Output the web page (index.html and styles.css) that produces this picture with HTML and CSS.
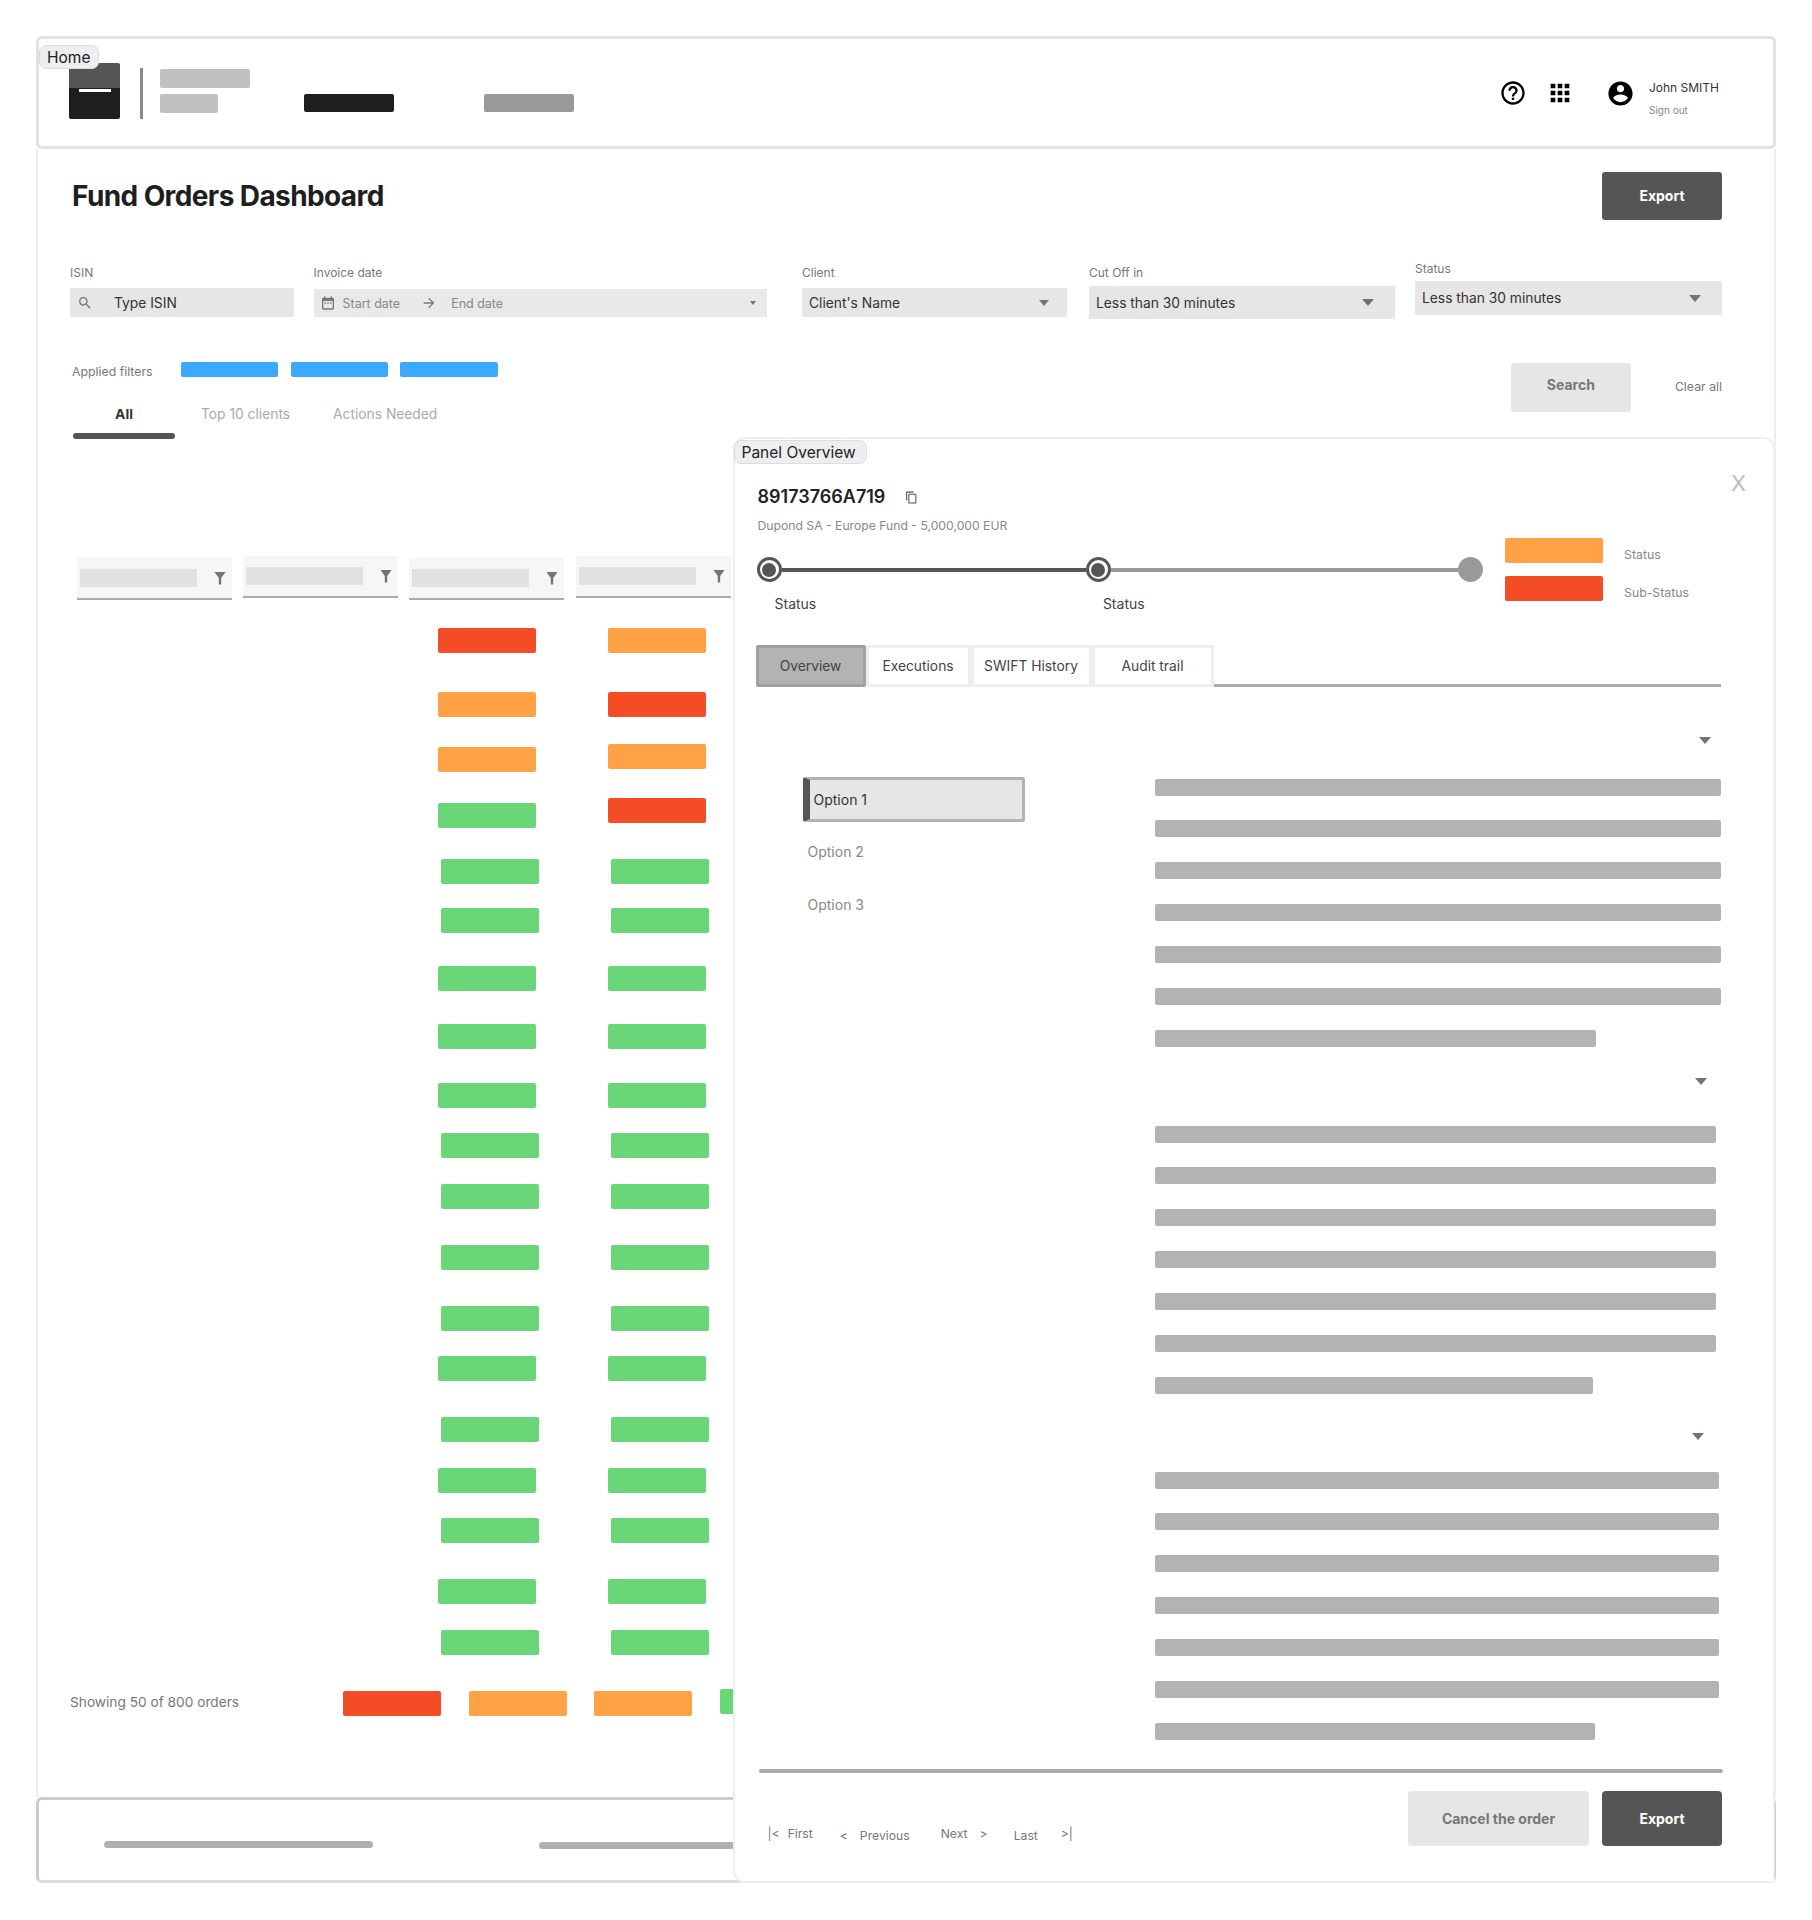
FILE: index.html
```html
<!DOCTYPE html>
<html>
<head>
  <link rel="stylesheet" href="styles.css">
</head>
<body>
  <div class="shell">
    <div class="frame-label home-label">Home</div>

    <header class="topbar">
      <div class="logo"><div class="logo-mark"></div></div>
      <div class="logo-divider"></div>
      <div class="brand">
        <div class="brand-line"></div>
        <div class="brand-line short"></div>
      </div>
      <div class="nav-item active"></div>
      <div class="nav-item"></div>
      <div class="user-tools">
        <svg class="tool-icon" viewBox="0 0 24 24"><path d="M11 18h2v-2h-2v2zm1-16C6.48 2 2 6.48 2 12s4.48 10 10 10 10-4.48 10-10S17.52 2 12 2zm0 18c-4.41 0-8-3.59-8-8s3.59-8 8-8 8 3.59 8 8-3.59 8-8 8zm0-14c-2.21 0-4 1.79-4 4h2c0-1.1.9-2 2-2s2 .9 2 2c0 2-3 1.75-3 5h2c0-2.25 3-2.5 3-5 0-2.21-1.79-4-4-4z"/></svg>
        <svg class="tool-icon apps" viewBox="0 0 24 24"><path d="M4 8h4V4H4v4zm6 12h4v-4h-4v4zm-6 0h4v-4H4v4zm0-6h4v-4H4v4zm6 0h4v-4h-4v4zm6-10v4h4V4h-4zm-6 4h4V4h-4v4zm6 6h4v-4h-4v4zm0 6h4v-4h-4v4z"/></svg>
        <svg class="tool-icon account" viewBox="0 0 24 24"><path d="M12 2C6.48 2 2 6.48 2 12s4.48 10 10 10 10-4.48 10-10S17.52 2 12 2zm0 3c1.66 0 3 1.34 3 3s-1.34 3-3 3-3-1.34-3-3 1.34-3 3-3zm0 14.2c-2.5 0-4.71-1.28-6-3.22.03-1.99 4-3.08 6-3.08 1.99 0 5.97 1.09 6 3.08-1.29 1.94-3.5 3.22-6 3.22z"/></svg>
        <div class="user-text">
          <div class="user-name">John SMITH</div>
          <div class="sign-out">Sign out</div>
        </div>
      </div>
    </header>

    <main class="main">
      <div class="title-row">
        <h1 class="title">Fund Orders Dashboard</h1>
        <button class="btn btn-dark">Export</button>
      </div>

      <div class="filter-row">
        <div class="field field-isin">
          <label class="field-label">ISIN</label>
          <div class="field-box">
            <svg class="field-icon" viewBox="0 0 24 24"><path d="M15.5 14h-.79l-.28-.27A6.47 6.47 0 0 0 16 9.5 6.5 6.5 0 1 0 9.5 16c1.61 0 3.09-.59 4.23-1.57l.27.28v.79l5 4.99L20.49 19l-4.99-5zm-6 0C7.01 14 5 11.99 5 9.5S7.01 5 9.5 5 14 7.01 14 9.5 11.99 14 9.5 14z"/></svg>
            <span class="field-value">Type ISIN</span>
          </div>
        </div>
        <div class="field field-date">
          <label class="field-label">Invoice date</label>
          <div class="field-box">
            <svg class="field-icon" viewBox="0 0 24 24"><path d="M19 4h-1V2h-2v2H8V2H6v2H5c-1.1 0-2 .9-2 2v14c0 1.1.9 2 2 2h14c1.1 0 2-.9 2-2V6c0-1.1-.9-2-2-2zm0 16H5V9h14v11zM7 11h2v2H7zm4 0h2v2h-2zm4 0h2v2h-2z"/></svg>
            <span class="date-start">Start date</span>
            <svg class="field-icon date-arrow" viewBox="0 0 24 24"><path d="M12 4l-1.41 1.41L16.17 11H4v2h12.17l-5.58 5.59L12 20l8-8z"/></svg>
            <span class="date-end">End date</span>
            <span class="caret caret-tiny"></span>
          </div>
        </div>
        <div class="field field-client">
          <label class="field-label">Client</label>
          <div class="field-box">
            <span class="field-value">Client's Name</span>
            <span class="caret caret-small"></span>
          </div>
        </div>
        <div class="field field-cutoff">
          <label class="field-label">Cut Off in</label>
          <div class="field-box">
            <span class="field-value">Less than 30 minutes</span>
            <span class="caret"></span>
          </div>
        </div>
        <div class="field field-status">
          <label class="field-label">Status</label>
          <div class="field-box">
            <span class="field-value">Less than 30 minutes</span>
            <span class="caret"></span>
          </div>
        </div>
      </div>

      <div class="search-row">
        <div>
          <div class="applied">
            <span class="applied-label">Applied filters</span>
            <span class="chip"></span>
            <span class="chip"></span>
            <span class="chip"></span>
          </div>
          <div class="list-tabs">
            <div class="list-tab active">All</div>
            <div class="list-tab">Top 10 clients</div>
            <div class="list-tab">Actions Needed</div>
          </div>
        </div>
        <div class="search-actions">
          <button class="btn btn-light btn-search">Search</button>
          <span class="clear-all">Clear all</span>
        </div>
      </div>

      <div class="table-head">
        <div class="th"><div class="th-name"></div><svg class="funnel" viewBox="0 0 16 16"><path d="M2.5 2h11L9.2 8v6.5H6.8V8z"/></svg></div>
        <div class="th up"><div class="th-name"></div><svg class="funnel" viewBox="0 0 16 16"><path d="M2.5 2h11L9.2 8v6.5H6.8V8z"/></svg></div>
        <div class="th"><div class="th-name"></div><svg class="funnel" viewBox="0 0 16 16"><path d="M2.5 2h11L9.2 8v6.5H6.8V8z"/></svg></div>
        <div class="th up"><div class="th-name"></div><svg class="funnel" viewBox="0 0 16 16"><path d="M2.5 2h11L9.2 8v6.5H6.8V8z"/></svg></div>
      </div>

      <div class="table-rows">
        <div class="badge red col3"></div><div class="badge orange col4"></div>
        <div class="badge orange col3"></div><div class="badge red col4"></div>
        <div class="badge orange col3"></div><div class="badge orange col4 up-3"></div>
        <div class="badge green col3"></div><div class="badge red col4 up-5"></div>
        <div class="badge green col3 shift"></div><div class="badge green col4 shift"></div>
        <div class="badge green col3 shift"></div><div class="badge green col4 shift"></div>
        <div class="badge green col3"></div><div class="badge green col4"></div>
        <div class="badge green col3"></div><div class="badge green col4"></div>
        <div class="badge green col3"></div><div class="badge green col4"></div>
        <div class="badge green col3 shift"></div><div class="badge green col4 shift"></div>
        <div class="badge green col3 shift"></div><div class="badge green col4 shift"></div>
        <div class="badge green col3 shift"></div><div class="badge green col4 shift"></div>
        <div class="badge green col3 shift"></div><div class="badge green col4 shift"></div>
        <div class="badge green col3"></div><div class="badge green col4"></div>
        <div class="badge green col3 shift"></div><div class="badge green col4 shift"></div>
        <div class="badge green col3"></div><div class="badge green col4"></div>
        <div class="badge green col3 shift"></div><div class="badge green col4 shift"></div>
        <div class="badge green col3"></div><div class="badge green col4"></div>
        <div class="badge green col3 shift"></div><div class="badge green col4 shift"></div>
      </div>

      <div class="table-foot">
        <span class="showing">Showing 50 of 800 orders</span>
        <div class="badge red"></div>
        <div class="badge orange"></div>
        <div class="badge orange"></div>
        <div class="badge green up-2"></div>
      </div>
    </main>

    <footer class="bottom-bar">
      <div class="bottom-line"></div>
      <div class="bottom-line low"></div>
    </footer>

    <aside class="panel">
      <div class="frame-label panel-label">Panel Overview</div>
      <div class="close">X</div>

      <div class="order-id">
        <span>89173766A719</span>
        <svg class="copy-icon" viewBox="0 0 24 24"><path d="M16 1H4c-1.1 0-2 .9-2 2v14h2V3h12V1zm3 4H8c-1.1 0-2 .9-2 2v14c0 1.1.9 2 2 2h11c1.1 0 2-.9 2-2V7c0-1.1-.9-2-2-2zm0 16H8V7h11v14z"/></svg>
      </div>
      <div class="order-sub">Dupond SA - Europe Fund - 5,000,000 EUR</div>

      <div class="status-row">
        <div>
          <div class="stepper">
            <span class="step done"></span>
            <span class="step-line done first"></span>
            <span class="step done"></span>
            <span class="step-line second"></span>
            <span class="step"></span>
          </div>
          <div class="step-labels">
            <span class="step-label">Status</span>
            <span class="step-label">Status</span>
          </div>
        </div>
        <div class="legend">
          <div class="legend-row"><div class="badge orange"></div><span class="legend-text">Status</span></div>
          <div class="legend-row"><div class="badge red"></div><span class="legend-text">Sub-Status</span></div>
        </div>
      </div>

      <div class="panel-tabs">
        <div class="panel-tab active tab-overview">Overview</div>
        <div class="panel-tab tab-exec">Executions</div>
        <div class="panel-tab tab-swift">SWIFT History</div>
        <div class="panel-tab tab-audit">Audit trail</div>
        <div class="tabs-line"></div>
      </div>

      <div class="panel-body">
        <div class="options">
          <div class="option active">Option 1</div>
          <div class="option">Option 2</div>
          <div class="option">Option 3</div>
        </div>
        <div class="details">
          <section class="detail one">
            <span class="caret detail-caret"></span>
            <div class="detail-bars">
              <div class="line"></div><div class="line"></div><div class="line"></div><div class="line"></div><div class="line"></div><div class="line"></div><div class="line short"></div>
            </div>
          </section>
          <section class="detail two">
            <span class="caret detail-caret"></span>
            <div class="detail-bars">
              <div class="line"></div><div class="line"></div><div class="line"></div><div class="line"></div><div class="line"></div><div class="line"></div><div class="line short"></div>
            </div>
          </section>
          <section class="detail three">
            <span class="caret detail-caret"></span>
            <div class="detail-bars">
              <div class="line"></div><div class="line"></div><div class="line"></div><div class="line"></div><div class="line"></div><div class="line"></div><div class="line short"></div>
            </div>
          </section>
        </div>
      </div>

      <div class="panel-divider"></div>

      <div class="panel-foot">
        <div class="pager">
          <span class="page-link first"><span>|&lt;</span><span>First</span></span>
          <span class="page-link prev low"><span>&lt;</span><span>Previous</span></span>
          <span class="page-link next"><span>Next</span><span>&gt;</span></span>
          <span class="page-link last"><span class="low">Last</span><span>&gt;|</span></span>
        </div>
        <div class="panel-actions">
          <button class="btn btn-light btn-cancel">Cancel the order</button>
          <button class="btn btn-dark btn-panel">Export</button>
        </div>
      </div>
    </aside>
  </div>
</body>
</html>
```

FILE: styles.css
```css
* {
  box-sizing: border-box;
  margin: 0;
  padding: 0;
}

body {
  background-color: #fff;
  font-family: Inter, "Liberation Sans", sans-serif;
  color: #333;
  padding: 36px;
}

button {
  font-family: inherit;
  border: none;
}

.shell {
  position: relative;
  width: 1740px;
  height: 1847px;
}

.frame-label {
  position: absolute;
  background-color: #eee;
  border: 1px solid #ddd;
  border-radius: 7px;
  font-size: 15.5px;
  line-height: 24px;
  color: #222;
  z-index: 2;
}

.home-label {
  top: 9px;
  left: 3px;
  width: 60px;
  height: 24px;
  padding-left: 7px;
}

/* top bar */
.topbar {
  display: flex;
  height: 113px;
  padding: 24px 0 0 30px;
  border: 3px solid #e2e2e2;
  border-radius: 6px;
}

.logo {
  width: 51px;
  height: 56px;
  border-radius: 2px;
  padding-top: 26px;
  background: linear-gradient(#555 45%, #1e1e1e 45%);
}

.logo-mark {
  width: 32px;
  height: 3px;
  margin: 0 auto;
  background-color: #fff;
}

.logo-divider {
  width: 3px;
  height: 51px;
  margin: 5px 0 0 20px;
  background-color: #888;
}

.brand {
  display: flex;
  flex-direction: column;
  gap: 6px;
  margin: 6px 0 0 17px;
}

.brand-line {
  width: 90px;
  height: 19px;
  border-radius: 2px;
  background-color: #c1c1c1;
}

.brand-line.short {
  width: 58px;
}

.nav-item {
  width: 90px;
  height: 18px;
  margin: 31px 0 0 90.5px;
  border-radius: 2px;
  background-color: #999;
}

.nav-item.active {
  margin-left: 53.5px;
  background-color: #1e1e1e;
}

.user-tools {
  display: flex;
  align-items: center;
  margin: 15px 0 0 auto;
  height: 30px;
  padding-right: 54px;
}

.tool-icon {
  width: 28px;
  height: 28px;
  fill: #000;
}

.tool-icon.apps {
  margin-left: 19px;
}

.tool-icon.account {
  width: 29px;
  height: 29px;
  margin-left: 32px;
}

.user-text {
  margin-left: 14px;
  padding-top: 11px;
}

.user-name {
  font-size: 12px;
  line-height: 14px;
  color: #333;
}

.sign-out {
  font-size: 10px;
  line-height: 12px;
  margin-top: 9px;
  color: #888;
}

/* main */
.main {
  height: 1648px;
  padding: 22.5px 52px 0 32px;
  border-left: 2px solid #eee;
  border-right: 2px solid #eee;
}

.title-row {
  display: flex;
  justify-content: space-between;
  align-items: center;
}

.title {
  font-size: 28px;
  font-weight: 700;
  letter-spacing: -0.6px;
  color: #1e1e1e;
  margin-left: 2px;
}

.btn {
  border-radius: 3px;
  font-size: 14px;
  font-weight: 700;
}

.btn-dark {
  width: 120px;
  height: 48px;
  background-color: #555;
  color: #fff;
}

.btn-light {
  background-color: #e6e6e6;
  color: #777;
}

.filter-row {
  display: flex;
  align-items: flex-start;
  margin-top: 46.5px;
}

.field-label {
  display: block;
  font-size: 12px;
  line-height: 14px;
  color: #777;
  margin-bottom: 8px;
}

.field-box {
  display: flex;
  align-items: center;
  height: 29px;
  padding-left: 7px;
  background-color: #e6e6e6;
  font-size: 13.8px;
}

.field-value {
  color: #333;
}

.field-icon {
  width: 16px;
  height: 16px;
  flex-shrink: 0;
  fill: #777;
}

.caret {
  display: inline-block;
  width: 0;
  height: 0;
  margin-left: auto;
  border-left: 6px solid transparent;
  border-right: 6px solid transparent;
  border-top: 7px solid #6f7575;
}

.caret-small {
  border-left-width: 5px;
  border-right-width: 5px;
  border-top-width: 6px;
  margin-right: 18px;
}

.caret-tiny {
  border-left-width: 3px;
  border-right-width: 3px;
  border-top-width: 4px;
  margin-right: 11px;
}

.field-isin {
  width: 224px;
}

.field-isin .field-icon {
  margin-right: 21px;
}

.field-date {
  width: 453px;
  margin-left: 19.5px;
}

.field-date .field-box {
  height: 28px;
  margin-top: 9px;
  padding-left: 6px;
  background-color: #e8eaea;
  font-size: 12.5px;
  color: #888;
}

.date-start {
  margin-left: 7px;
}

.date-arrow {
  margin-left: 21px;
}

.date-end {
  margin-left: 14px;
}

.field-client {
  width: 265px;
  margin-left: 35.5px;
}

.field-cutoff {
  width: 306px;
  margin-left: 22px;
}

.field-cutoff .field-label {
  margin-bottom: 6px;
}

.field-cutoff .field-box {
  height: 33px;
}

.field-cutoff .caret,
.field-status .caret {
  margin-right: 21px;
}

.field-status {
  width: 306.5px;
  margin: -4px 0 0 20px;
}

.field-status .field-label {
  margin-bottom: 5px;
}

.field-status .field-box {
  height: 34px;
}

.search-row {
  display: flex;
  justify-content: space-between;
  margin-top: 43px;
}

.applied {
  display: flex;
  align-items: center;
  gap: 12.2px;
  height: 15px;
  padding-left: 2px;
}

.applied-label {
  width: 96.8px;
  margin-top: 4px;
  font-size: 12.3px;
  color: #777;
}

.chip {
  width: 97.5px;
  height: 15px;
  border-radius: 2px;
  background-color: #3aa9ff;
}

.list-tabs {
  display: flex;
  margin: 30px 0 0 3px;
  font-size: 13.8px;
  line-height: 14px;
  color: #aaa;
}

.list-tab {
  margin-right: 43px;
}

.list-tab.active {
  width: 102px;
  margin-right: 26px;
  text-align: center;
  font-weight: 700;
  color: #333;
}

.list-tab.active::after {
  content: "";
  display: block;
  height: 6px;
  margin-top: 12px;
  border-radius: 3px;
  background-color: #555;
}

.search-actions {
  display: flex;
  align-items: center;
  gap: 44px;
  height: 49px;
  margin-top: 1px;
}

.btn-search {
  width: 120px;
  height: 49px;
  border-radius: 4px;
  padding-bottom: 7px;
}

.clear-all {
  margin-top: -2px;
  font-size: 12.3px;
  color: #777;
}

/* table */
.table-head {
  display: flex;
  gap: 11.2px;
  margin: 119px 0 0 7px;
}

.th {
  display: flex;
  align-items: center;
  justify-content: space-between;
  width: 155px;
  height: 42px;
  padding: 0 4px 0 3px;
  background-color: #f5f6f7;
  border-bottom: 2px solid #aaa;
}

.th.up {
  margin-top: -2px;
}

.th-name {
  width: 117px;
  height: 18px;
  background-color: #e0e1e2;
}

.funnel {
  width: 16px;
  height: 16px;
  fill: #6f7575;
}

.table-rows {
  display: grid;
  grid-template-columns: repeat(4, 166.5px);
  grid-template-rows: 64px 55px 56px 56px 49px 58px 58px 59px 50px 51px 61px 61px 50px 61px 51px 50px 61px 51px 25px;
  margin: 28px 0 0 7px;
}

.badge {
  width: 98px;
  height: 25px;
  border-radius: 2px;
}

.red {
  background-color: #f44c24;
}

.orange {
  background-color: #ffa145;
}

.green {
  background-color: #69d677;
}

.col3 {
  grid-column: 3;
  margin-left: 28px;
}

.col4 {
  grid-column: 4;
  margin-left: 31px;
}

.col3.shift {
  margin-left: 30.5px;
}

.col4.shift {
  margin-left: 34px;
}

.up-2 {
  margin-top: -4px;
}

.up-3 {
  margin-top: -3px;
}

.up-5 {
  margin-top: -5px;
}

.table-foot {
  display: flex;
  align-items: center;
  gap: 27.5px;
  margin-top: 36px;
}

.showing {
  width: 245.5px;
  margin-top: -3px;
  font-size: 13.7px;
  color: #777;
}

/* bottom bar */
.bottom-bar {
  display: flex;
  gap: 166px;
  height: 86px;
  padding: 41px 0 0 65px;
  border: 3px solid #ccc;
  border-bottom-color: #ddd;
  border-radius: 6px;
}

.bottom-line {
  width: 269px;
  height: 7px;
  border-radius: 4px;
  background-color: #b0b0b0;
}

.bottom-line.low {
  margin-top: 1px;
}

/* side panel */
.panel {
  position: absolute;
  top: 401px;
  left: 696.5px;
  right: 1px;
  bottom: 0;
  padding: 47px 52px 0 23px;
  background-color: #fff;
  border: 2px solid #eee;
  border-radius: 12px 12px 0 12px;
  z-index: 3;
}

.panel-label {
  top: 1px;
  left: -1px;
  width: 133px;
  height: 24px;
  padding-left: 7px;
}

.close {
  position: absolute;
  top: 31px;
  right: 27px;
  font-size: 22px;
  line-height: 26px;
  color: #bbb;
}

.order-id {
  display: flex;
  align-items: center;
  gap: 20px;
  font-size: 18px;
  line-height: 22px;
  font-weight: 600;
  color: #222;
}

.copy-icon {
  width: 13px;
  height: 13px;
  fill: #555;
}

.order-sub {
  margin-top: 10px;
  font-size: 12.2px;
  line-height: 16px;
  color: #888;
}

.status-row {
  display: flex;
  margin-top: 4px;
}

.stepper {
  display: flex;
  align-items: center;
  margin-left: -1px;
  padding-top: 19px;
}

.step {
  display: flex;
  align-items: center;
  justify-content: center;
  width: 25px;
  height: 25px;
  border-radius: 50%;
  background-color: #999;
}

.step.done {
  background-color: #fff;
  border: 3px solid #555;
}

.step.done::after {
  content: "";
  width: 14px;
  height: 14px;
  border-radius: 50%;
  background-color: #555;
}

.step-line {
  height: 4px;
  background-color: #999;
}

.step-line.done {
  background-color: #555;
}

.step-line.first {
  width: 304px;
}

.step-line.second {
  width: 347px;
}

.step-labels {
  display: flex;
  margin: 14px 0 0 17px;
  font-size: 14px;
  line-height: 16px;
  color: #444;
}

.step-label {
  width: 328.4px;
}

.legend {
  display: flex;
  flex-direction: column;
  gap: 13px;
  margin-left: 22.5px;
}

.legend-row {
  display: flex;
  align-items: center;
  gap: 21px;
}

.legend-text {
  margin-top: 8px;
  font-size: 12.3px;
  color: #888;
}

.panel-tabs {
  display: flex;
  margin: 33px 0 0 -2px;
  font-size: 13.8px;
  color: #444;
}

.panel-tab {
  display: flex;
  align-items: center;
  justify-content: center;
  height: 42px;
  background-color: #fff;
  border: 3px solid #eee;
  border-radius: 2px;
}

.panel-tab.active {
  background-color: #b3b3b3;
  border-color: #a0a0a0;
}

.tab-overview {
  width: 110px;
}

.tab-exec {
  width: 105px;
}

.tab-swift {
  width: 121px;
}

.tab-audit {
  width: 122px;
}

.tabs-line {
  flex: 1;
  height: 3px;
  margin-top: 39px;
  background-color: #aaa;
}

.panel-body {
  display: flex;
}

.options {
  width: 397.5px;
  padding: 90px 0 0 45px;
  font-size: 14px;
  line-height: 17px;
  color: #888;
}

.option {
  padding-left: 5px;
  margin-bottom: 36px;
}

.option.active {
  display: flex;
  align-items: center;
  width: 222px;
  height: 45px;
  margin-bottom: 21px;
  padding-left: 4px;
  background-color: #e6e6e6;
  border: 3px solid #b3b3b3;
  border-left: 7px solid #555;
  border-radius: 3px;
  color: #333;
}

.details {
  flex: 1;
}

.detail-caret {
  display: block;
}

.detail-bars {
  display: flex;
  flex-direction: column;
  gap: 24.85px;
}

.line {
  height: 17px;
  border-radius: 2px;
  background-color: #b3b3b3;
}

.line.short {
  width: 78%;
}

.detail.one {
  padding-top: 49.5px;
}

.detail.one .detail-caret {
  margin-right: 10px;
}

.detail.one .detail-bars {
  margin-top: 35px;
}

.detail.two {
  padding: 31px 5px 0 0;
}

.detail.two .detail-caret {
  margin-right: 9px;
}

.detail.two .detail-bars {
  margin-top: 41px;
}

.detail.three {
  padding: 39px 2px 0 0;
}

.detail.three .detail-caret {
  margin-right: 15px;
}

.detail.three .detail-bars {
  margin-top: 32px;
}

.panel-divider {
  height: 4px;
  margin: 29.2px -2px 0 1.5px;
  border-radius: 2px;
  background-color: #aaa;
}

.panel-foot {
  display: flex;
  justify-content: space-between;
  margin-top: 18px;
}

.pager {
  display: flex;
  padding: 35px 0 0 10px;
  font-size: 12.2px;
  line-height: 16px;
  color: #777;
}

.page-link {
  display: flex;
}

.low {
  margin-top: 2px;
}

.page-link.first {
  gap: 8px;
}

.page-link.prev {
  gap: 12px;
  margin-left: 27px;
}

.page-link.next {
  gap: 12px;
  margin-left: 31px;
}

.page-link.last {
  gap: 23px;
  margin-left: 26px;
}

.panel-actions {
  display: flex;
  gap: 13px;
  margin-right: -1px;
}

.btn-cancel {
  width: 181px;
  height: 55px;
  border-radius: 4px;
}

.btn-panel {
  height: 55px;
  border-radius: 4px;
}
```
